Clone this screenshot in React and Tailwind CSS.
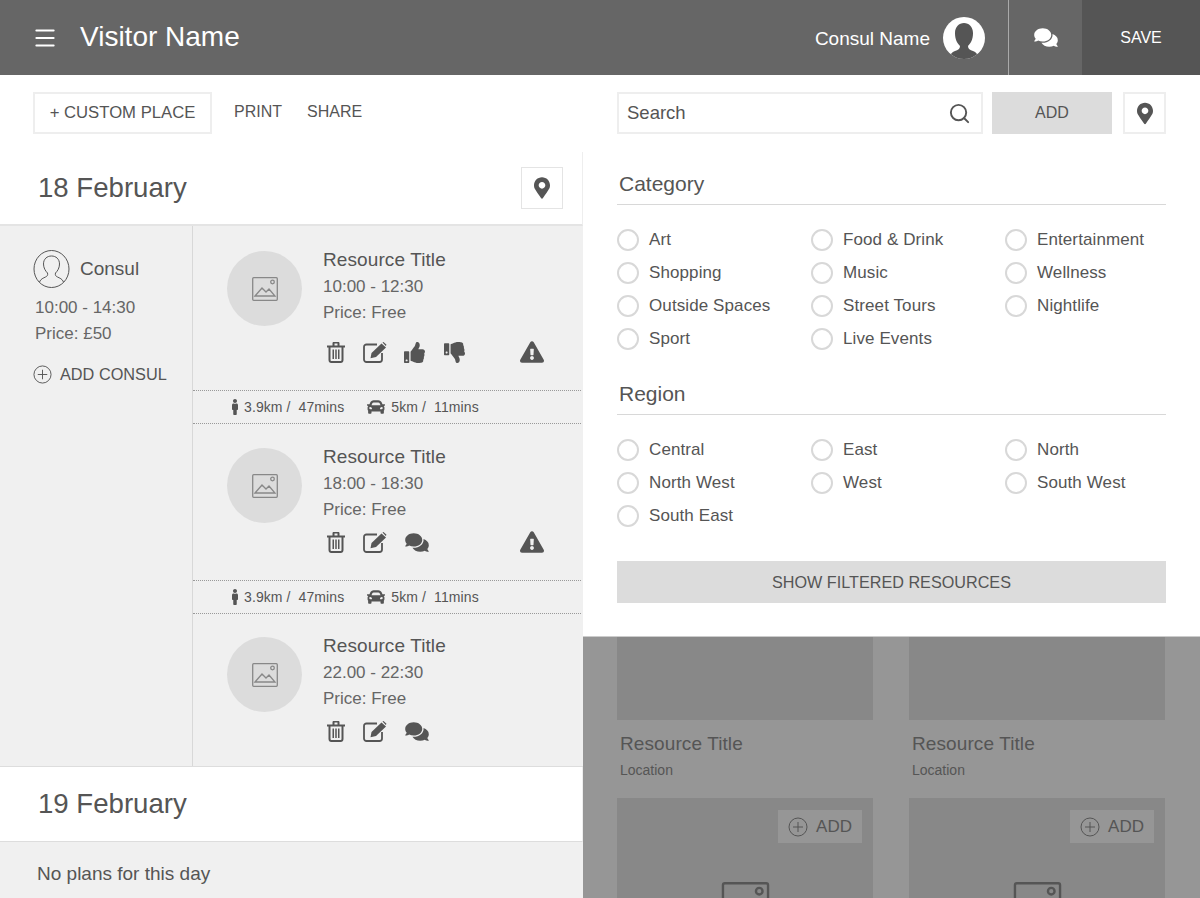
import React from "react";
import { Menu, Search } from "lucide-react";
import {
  FaCar,
  FaComments,
  FaExclamationTriangle,
  FaMale,
  FaMapMarkerAlt,
  FaThumbsDown,
  FaThumbsUp,
} from "react-icons/fa";

const categories = [
  "Art", "Food & Drink", "Entertainment",
  "Shopping", "Music", "Wellness",
  "Outside Spaces", "Street Tours", "Nightlife",
  "Sport", "Live Events",
];

const regions = [
  "Central", "East", "North",
  "North West", "West", "South West",
  "South East",
];

const PersonIcon = ({ className }) => (
  <svg viewBox="0 0 36 38" className={className} fill="none" stroke="currentColor" strokeWidth="1">
    <ellipse cx="18" cy="19" rx="17.500" ry="18.500" />
    <path d="M6 32c1-3 4-4 6-5 2-1 2.500-2 2-4-2-2-4-5-4-9 0-5 3.500-8 8-8s8 3 8 8c0 4-2 7-4 9-.5 2 0 3 2 4 2 1 5 2 6 5" />
  </svg>
);

const ImageIcon = ({ className }) => (
  <svg viewBox="0 0 26 24" className={className} fill="none" stroke="currentColor" strokeWidth="1.300">
    <rect x="0.700" y="0.700" width="24.600" height="22.600" rx="1" />
    <path d="M3 19 10 11l4 4 3-3 6 7z" />
    <circle cx="20.500" cy="5" r="1.800" />
  </svg>
);

const PlusCircle = ({ className }) => (
  <svg viewBox="0 0 20 20" className={className} fill="none" stroke="currentColor" strokeWidth="1">
    <circle cx="10" cy="10" r="9" />
    <path d="M10 5v10M5 10h10" />
  </svg>
);

const TrashIcon = ({ className }) => (
  <svg viewBox="0 0 18 21" className={className} fill="currentColor">
    <path d="M5.500 3.500V1.200C5.500.5 6 0 6.700 0h4.600c.7 0 1.200.5 1.200 1.200v2.300H18v2h-1.500V18c0 1.700-1.200 3-2.700 3H4.200c-1.500 0-2.700-1.300-2.700-3V5.500H0v-2zm2-2v2h3v-2zm-4 4V18c0 .6.300 1 .7 1h9.600c.4 0 .7-.4.7-1V5.500z" />
    <path d="M5.500 7.500h1.500V17H5.500zM8.250 7.500h1.500V17h-1.500zM11 7.500h1.500V17H11z" />
  </svg>
);

const EditIcon = ({ className }) => (
  <svg viewBox="0 0 24 21" className={className}>
    <path d="M14 2.500H3.500A2.500 2.500 0 0 0 1 5v12.500A2.500 2.500 0 0 0 3.500 20h13a2.500 2.500 0 0 0 2.500-2.500V11" fill="none" stroke="currentColor" strokeWidth="1.800" />
    <path d="M8.500 11 18.500 1.500l4.500 4L13 15l-5.500 1.200zM19.500.6l1-.6 3 2.800-.7 1.200z" fill="currentColor" />
  </svg>
);

const Radio = ({ label }) => (
  <div className="flex items-center h-[33px] gap-[10px]">
    <span className="w-[22px] h-[22px] rounded-full bg-white border-2 border-[#d8d8d8] shrink-0"></span>
    <span className="text-[17px] tracking-[0.1px] text-[#555]">{label}</span>
  </div>
);

const FilterGroup = ({ title, items }) => (
  <div>
    <h3 className="text-[21px] leading-[24px] text-[#555] pl-[2px] pb-[8px] border-b border-[#d8d8d8]">{title}</h3>
    <div className="grid grid-cols-[194px_194px_1fr] mt-[18px]">
      {items.map((item) => (
        <Radio key={item} label={item} />
      ))}
    </div>
  </div>
);

const Travel = () => (
  <div className="h-[34px] mr-[2px] flex items-center pl-[34px] text-[14px] tracking-[0.1px] text-[#555] border-y border-dotted border-[#999]">
    <FaMale className="w-[16px] h-[16px] mr-[1px] text-[#555]" />
    <span className="mr-[23px]">3.9km / &nbsp;47mins</span>
    <FaCar className="w-[18px] h-[18px] mr-[6px] text-[#555]" />
    <span>5km / &nbsp;11mins</span>
  </div>
);

const Resource = ({ time, liked, warn, gap, height, top }) => (
  <div className={`flex pl-[34px] gap-[21px] ${top} ${height}`}>
    <div className="w-[75px] h-[75px] rounded-full bg-[#dcdcdc] flex items-center justify-center shrink-0">
      <ImageIcon className="w-[28px] h-[24px] text-[#888]" />
    </div>
    <div className="flex-1 -mt-[4px] pr-[39px]">
      <div className="text-[19px] tracking-[0.1px] leading-[26px] text-[#555]">Resource Title</div>
      <div className="text-[17px] leading-[26px] mt-[1px] text-[#666]">{time}</div>
      <div className="text-[17px] leading-[26px] text-[#666]">Price: Free</div>
      <div className={`flex items-center h-[24px] pl-[4px] text-[#555] ${gap}`}>
        <TrashIcon className="w-[18px] h-[21px]" />
        <EditIcon className="w-[24px] h-[21px] ml-[18px]" />
        {liked ? (
          <>
            <FaThumbsUp className="w-[21px] h-[21px] ml-[17px]" />
            <FaThumbsDown className="w-[21px] h-[21px] ml-[19px]" />
          </>
        ) : (
          <FaComments className="w-[24px] h-[21px] ml-[18px]" />
        )}
        {warn && <FaExclamationTriangle className="w-[24px] h-[22px] ml-auto" />}
      </div>
    </div>
  </div>
);

const LowerCard = ({ add }) => (
  <div className="flex flex-col">
    {add ? (
      <div className="h-[140px] bg-[#888] pt-[12px] pr-[11px] flex flex-col items-end overflow-hidden">
        <div className="w-[84px] h-[33px] bg-[#969696] flex items-center justify-center gap-[8px] text-[#555] text-[17px]">
          <PlusCircle className="w-[20px] h-[20px]" />
          ADD
        </div>
        <ImageIcon className="w-[49px] h-[44px] mt-[39px] mr-[92px] text-[#555] shrink-0" />
      </div>
    ) : (
      <>
        <div className="h-[83px] bg-[#888]"></div>
        <div className="text-[19px] tracking-[0.1px] leading-[24px] text-[#555] pl-[3px] mt-[12px]">Resource Title</div>
        <div className="text-[14px] leading-[20px] text-[#555] pl-[3px] mt-[4px]">Location</div>
      </>
    )}
  </div>
);

export default function App() {
  return (
    <div className="w-[1200px] h-[898px] overflow-hidden bg-white font-['Liberation_Sans',Arial,sans-serif]">
      {/* top bar */}
      <header className="h-[75px] bg-[#666] flex items-center text-white">
        <Menu className="w-[26px] h-[26px] ml-[32px]" strokeWidth={1.800} />
        <div className="text-[28px] ml-[22px] -mt-[2px]">Visitor Name</div>
        <div className="ml-auto text-[19px] mt-[3px]">Consul Name</div>
        <div className="w-[42px] h-[42px] rounded-full bg-white ml-[13px] mr-[23px] overflow-hidden">
          <svg viewBox="0 0 42 42" className="w-full h-full" fill="#555">
            <path d="M7 42c0-5 2-7 5-8 3-1 5-2 5-5-3-3-5-7-5-13 0-6 4-10 9-10s9 4 9 10c0 6-2 10-5 13 0 3 2 4 5 5 3 1 5 3 5 8z" />
          </svg>
        </div>
        <div className="w-[74px] h-full border-l border-[#aaa] flex items-center justify-center">
          <FaComments className="w-[24px] h-[21px] text-white" />
        </div>
        <div className="w-[118px] h-full bg-[#555] flex items-center justify-center text-[16px]">SAVE</div>
      </header>

      <div className="flex h-[823px]">
        {/* itinerary */}
        <section className="w-[583px] flex flex-col">
          <div className="h-[77px] flex items-start pt-[17px] pl-[33px]">
            <button className="w-[179px] h-[42px] border-2 border-[#eee] text-[16.700px] text-[#555]">+ CUSTOM PLACE</button>
            <span className="text-[16px] text-[#555] ml-[22px] leading-[40px]">PRINT</span>
            <span className="text-[16px] text-[#555] ml-[25px] leading-[40px]">SHARE</span>
          </div>
          <div className="h-[74px] flex items-center justify-between pl-[38px] pr-[19px] border-r border-[#eee] border-b-2 border-b-[#e4e4e4]">
            <h2 className="text-[27.600px] text-[#555]">18 February</h2>
            <div className="w-[42px] h-[42px] border border-[#e4e4e4] flex items-center justify-center">
              <FaMapMarkerAlt className="w-[16px] h-[22px] text-[#555]" />
            </div>
          </div>
          <div className="h-[541px] flex bg-[#f0f0f0] border-b border-[#ddd]">
            <div className="w-[193px] border-r border-[#d8d8d8] pl-[33px] pt-[24px] shrink-0">
              <div className="flex items-center gap-[10px]">
                <PersonIcon className="w-[37px] h-[38px] text-[#555]" />
                <span className="text-[19px] text-[#555]">Consul</span>
              </div>
              <div className="text-[17px] leading-[26px] text-[#666] pl-[2px] mt-[7px]">10:00 - 14:30</div>
              <div className="text-[17px] leading-[26px] text-[#666] pl-[2px]">Price: £50</div>
              <div className="flex items-center gap-[8px] mt-[15px] text-[16.300px] text-[#555]">
                <PlusCircle className="w-[19px] h-[19px]" />
                ADD CONSUL
              </div>
            </div>
            <div className="flex-1 min-w-0">
              <Resource time="10:00 - 12:30" liked warn top="pt-[25px]" gap="mt-[14px]" height="h-[164px]" />
              <Travel />
              <Resource time="18:00 - 18:30" warn top="pt-[24px]" gap="mt-[7px]" height="h-[156px]" />
              <Travel />
              <Resource time="22.00 - 22:30" top="pt-[23px]" gap="mt-[7px]" height="h-[152px]" />
            </div>
          </div>
          <div className="h-[75px] flex items-center pl-[38px] border-b border-[#ddd] border-r border-r-[#eee]">
            <h2 className="text-[27.600px] text-[#555] -mt-[1px]">19 February</h2>
          </div>
          <div className="flex-1 bg-[#f0f0f0] pl-[37px] pt-[18px] text-[19px] text-[#555]">No plans for this day</div>
        </section>

        {/* resource search */}
        <section className="flex-1 flex flex-col min-w-0">
          <div className="bg-white px-[34px] h-[562px] border-b border-[#ccc] shrink-0">
            <div className="flex pt-[17px]">
              <div className="w-[366px] h-[42px] border-2 border-[#eee] flex items-center justify-between pl-[8px] pr-[10px] text-[18.500px] text-[#555]">
                Search
                <Search className="w-[23px] h-[23px]" strokeWidth={2} />
              </div>
              <button className="w-[120px] h-[42px] bg-[#dcdcdc] ml-[9px] text-[16px] text-[#555]">ADD</button>
              <div className="w-[43px] h-[42px] border-2 border-[#eee] ml-[11px] flex items-center justify-center">
                <FaMapMarkerAlt className="w-[16px] h-[23px] text-[#555]" />
              </div>
            </div>
            <div className="mt-[38px]">
              <FilterGroup title="Category" items={categories} />
            </div>
            <div className="mt-[27px]">
              <FilterGroup title="Region" items={regions} />
            </div>
            <button className="w-full h-[42px] bg-[#dcdcdc] mt-[29px] text-[16.200px] text-[#555]">SHOW FILTERED RESOURCES</button>
          </div>
          <div className="flex-1 bg-[#969696] px-[34px] overflow-hidden">
            <div className="grid grid-cols-[256px_256px] gap-x-[36px] gap-y-[18px]">
              <LowerCard />
              <LowerCard />
              <LowerCard add />
              <LowerCard add />
            </div>
          </div>
        </section>
      </div>
    </div>
  );
}
